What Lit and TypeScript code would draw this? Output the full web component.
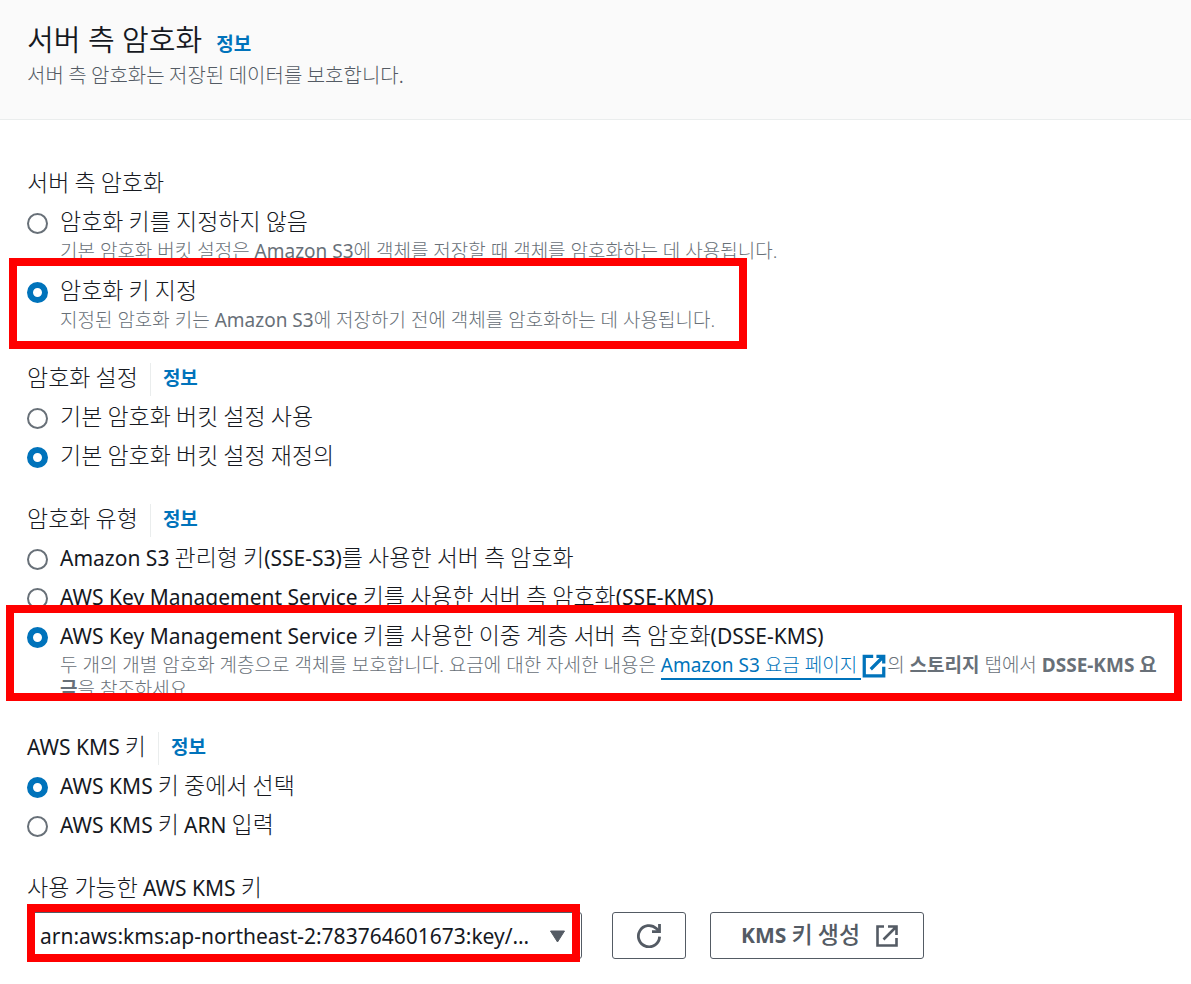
import { LitElement, html, css, svg, nothing } from "lit";
import { customElement, property, state } from "lit/decorators.js";

/** Wraps each Latin run in a span, so that it can be set apart from the Hangul around it. */
const mixed = (text: string) =>
  text
    .split(/([A-Za-z0-9(][\x21-\x7e]*(?: [A-Za-z0-9(][\x21-\x7e]*)*\)?)/)
    .map((part, i) => (i % 2 ? html`<span class="latin">${part}</span>` : part));

const externalIcon = html`<svg class="icon" viewBox="0 0 16 16" aria-hidden="true">
  ${svg`<path d="M14 8.5V14H2V2h5.5M9.5 2H14v4.5M14 2 6 10" fill="none" stroke="currentColor" stroke-width="2" />`}
</svg>`;

const thinExternalIcon = html`<svg class="icon" viewBox="0 0 26 26" aria-hidden="true">
  ${svg`<path d="M10 3.5H3.5v19h19V15M14 3.5h8.5V12M22 4 9.5 16.5" fill="none" stroke="currentColor" stroke-width="2.6" />`}
</svg>`;

const refreshIcon = html`<svg class="refresh-icon" viewBox="0 0 24 24" aria-hidden="true">
  ${svg`<path d="M22.6 12.6A10.6 10.6 0 1 1 19.4 4.6L22 7.2" fill="none" stroke="currentColor" stroke-width="2.8" />
  <path d="M22.5 0V7.7H15" fill="none" stroke="currentColor" stroke-width="2.8" />`}
</svg>`;

const textStyles = css`
  * {
    box-sizing: border-box;
  }
  .latin {
    font-family: "Noto Sans", sans-serif;
    font-size: 21px;
    font-weight: 400;
    line-height: 1;
  }
  .small .latin {
    font-size: 19px;
  }
  .info {
    font-size: 19px;
    font-weight: 700;
    color: #0073bb;
    text-decoration: none;
  }
  .icon {
    width: 26px;
    height: 26px;
    flex: none;
  }
`;

interface Choice {
  value: string;
  label: string;
  description?: unknown;
  marked?: "narrow" | "wide";
}

@customElement("radio-group")
export class RadioGroup extends LitElement {
  @property() heading = "";
  @property() name = "";
  @property() selected = "";
  @property({ type: Boolean }) info = false;
  @property({ attribute: false }) choices: Choice[] = [];

  static styles = [
    textStyles,
    css`
      :host {
        display: block;
      }
      .group {
        display: flex;
        flex-direction: column;
        gap: 6px;
      }
      .heading {
        display: flex;
      }
      .heading > *,
      .text {
        line-height: 27px;
        padding-bottom: 6px;
      }
      .info {
        margin-left: 12px;
        padding-left: 12px;
        border-left: 1px solid #eaeded;
      }
      .choice {
        position: relative;
        display: grid;
        grid-template-columns: 21px minmax(0, 1fr);
        column-gap: 12px;
      }
      .narrow {
        width: fit-content;
      }
      .described + .choice {
        margin-top: 6px;
      }
      .radio {
        appearance: none;
        width: 21px;
        height: 21px;
        margin: 0;
        align-self: center;
        border: 2px solid #687078;
        border-radius: 50%;
        background: #fff;
      }
      .radio:checked {
        border: 6px solid #0073bb;
      }
      .small {
        grid-column: 2;
        margin-top: -1px;
        padding-bottom: 1px;
        font-family: "Noto Sans", "Noto Sans CJK KR", sans-serif;
        font-size: 19px;
        line-height: 24px;
        color: #687078;
      }
      .external {
        color: #0073bb;
        text-decoration: none;
      }
      .external .words {
        padding-right: 4px;
        border-bottom: 2px solid #0073bb;
      }
      .external .icon {
        vertical-align: -3px;
        margin: -4px 0;
      }
      .bold,
      .bold .latin {
        font-weight: 700;
      }
      .mark {
        position: absolute;
        border: 8px solid #ff0000;
        pointer-events: none;
      }
      .narrow .mark {
        inset: -18px -32px -16px -18px;
      }
      .wide .mark {
        inset: -16px -17px 1px -21px;
      }
    `,
  ];

  render() {
    return html`<div class="group" role="radiogroup" aria-labelledby="heading">
      <div class="heading">
        <span id="heading">${mixed(this.heading)}</span>
        ${this.info ? html`<a class="info" href="#">정보</a>` : nothing}
      </div>
      ${this.choices.map(
        (c) => html`<div class="choice ${c.description ? "described" : ""} ${c.marked ?? ""}">
          <input
            class="radio"
            type="radio"
            id=${c.value}
            name=${this.name}
            .checked=${c.value === this.selected}
            @change=${() => (this.selected = c.value)}
          />
          <label class="text" for=${c.value}>${mixed(c.label)}</label>
          ${c.description ? html`<div class="small">${c.description}</div>` : nothing}
          ${c.marked ? html`<span class="mark"></span>` : nothing}
        </div>`
      )}
    </div>`;
  }
}

@customElement("app-root")
export class AppRoot extends LitElement {
  @state() private key = "arn:aws:kms:ap-northeast-2:783764601673:key/…";

  static styles = [
    textStyles,
    css`
      :host {
        display: block;
        font-family: "Noto Sans CJK KR", sans-serif;
        font-size: 23px;
        font-weight: 300;
        color: #16191f;
        background: #fff;
      }
      .header {
        background: #fafafa;
        border-bottom: 1px solid #eaeded;
        padding: 22px 27px 30px;
      }
      .title-row {
        display: flex;
        align-items: baseline;
        gap: 14px;
        line-height: 36px;
      }
      .title {
        margin: 0;
        font-family: "Noto Sans", "Noto Sans CJK KR", sans-serif;
        font-size: 29px;
        font-weight: 350;
      }
      .subtitle {
        margin: 0;
        font-size: 20px;
        line-height: 28px;
        color: #545b64;
      }
      .body {
        display: flex;
        flex-direction: column;
        gap: 30px;
        padding: 48px 26px 24px 27px;
      }
      .key-label {
        display: block;
        line-height: 27px;
        padding-bottom: 6px;
        margin-bottom: 6px;
      }
      .key-row {
        display: flex;
        align-items: stretch;
        gap: 24px;
        height: 47px;
      }
      .picker {
        position: relative;
        flex: 0 1 555px;
        margin-right: 6px;
      }
      .select {
        appearance: none;
        width: 100%;
        height: 100%;
        padding: 0 48px 0 12px;
        border: 1px solid #545b64;
        border-radius: 3px;
        background: #fff;
        color: inherit;
        font-family: "Noto Sans", sans-serif;
        font-size: 21px;
        font-weight: 400;
      }
      .arrow {
        position: absolute;
        right: 16px;
        top: 18px;
        width: 17px;
        height: 13px;
        color: #545b64;
        pointer-events: none;
      }
      .mark {
        position: absolute;
        inset: -8px 2px -3px 0;
        border: 8px solid #ff0000;
        pointer-events: none;
      }
      .button {
        display: flex;
        align-items: center;
        justify-content: center;
        gap: 14px;
        padding: 0 23px 0 30px;
        border: 1px solid #545b64;
        border-radius: 3px;
        background: #fff;
        color: #545b64;
        font: inherit;
        font-weight: 500;
      }
      .button .latin {
        font-weight: 700;
      }
      .button-text {
        padding-bottom: 6px;
      }
      .refresh {
        padding: 0 24px;
      }
      .refresh-icon {
        width: 24px;
        height: 24px;
      }
    `,
  ];

  render() {
    return html`
      <header class="header">
        <div class="title-row">
          <h2 class="title">서버 측 암호화</h2>
          <a class="info" href="#">정보</a>
        </div>
        <p class="subtitle">서버 측 암호화는 저장된 데이터를 보호합니다.</p>
      </header>
      <main class="body">
        <radio-group
          heading="서버 측 암호화"
          name="encryption"
          selected="specify"
          .choices=${[
            {
              value: "none",
              label: "암호화 키를 지정하지 않음",
              description: mixed("기본 암호화 버킷 설정은 Amazon S3에 객체를 저장할 때 객체를 암호화하는 데 사용됩니다."),
            },
            {
              value: "specify",
              label: "암호화 키 지정",
              description: mixed("지정된 암호화 키는 Amazon S3에 저장하기 전에 객체를 암호화하는 데 사용됩니다."),
              marked: "narrow",
            },
          ]}
        ></radio-group>
        <radio-group
          heading="암호화 설정"
          info
          name="settings"
          selected="override"
          .choices=${[
            { value: "default", label: "기본 암호화 버킷 설정 사용" },
            { value: "override", label: "기본 암호화 버킷 설정 재정의" },
          ]}
        ></radio-group>
        <radio-group
          heading="암호화 유형"
          info
          name="type"
          selected="dsse-kms"
          .choices=${[
            { value: "sse-s3", label: "Amazon S3 관리형 키(SSE-S3)를 사용한 서버 측 암호화" },
            { value: "sse-kms", label: "AWS Key Management Service 키를 사용한 서버 측 암호화(SSE-KMS)" },
            {
              value: "dsse-kms",
              label: "AWS Key Management Service 키를 사용한 이중 계층 서버 측 암호화(DSSE-KMS)",
              description: html`두 개의 개별 암호화 계층으로 객체를 보호합니다. 요금에 대한 자세한 내용은
                <a class="external" href="#"><span class="words">${mixed("Amazon S3 요금 페이지")}</span>${externalIcon}</a>의
                <b class="bold">스토리지</b> 탭에서 <b class="bold">${mixed("DSSE-KMS 요금")}</b>을 참조하세요.`,
              marked: "wide",
            },
          ]}
        ></radio-group>
        <radio-group
          heading="AWS KMS 키"
          info
          name="source"
          selected="choose"
          .choices=${[
            { value: "choose", label: "AWS KMS 키 중에서 선택" },
            { value: "arn", label: "AWS KMS 키 ARN 입력" },
          ]}
        ></radio-group>
        <div>
          <label class="key-label" for="key">${mixed("사용 가능한 AWS KMS 키")}</label>
          <div class="key-row">
            <div class="picker">
              <select class="select" id="key">
                <option>${this.key}</option>
              </select>
              <svg class="arrow" viewBox="0 0 17 13" aria-hidden="true">
                <path d="M1.5 1h14l-7 11z" fill="currentColor" stroke="currentColor" stroke-linejoin="round" />
              </svg>
              <span class="mark"></span>
            </div>
            <button class="button refresh" type="button" aria-label="새로 고침">${refreshIcon}</button>
            <button class="button" type="button"><span class="button-text">${mixed("KMS 키 생성")}</span>${thinExternalIcon}</button>
          </div>
        </div>
      </main>
    `;
  }
}
